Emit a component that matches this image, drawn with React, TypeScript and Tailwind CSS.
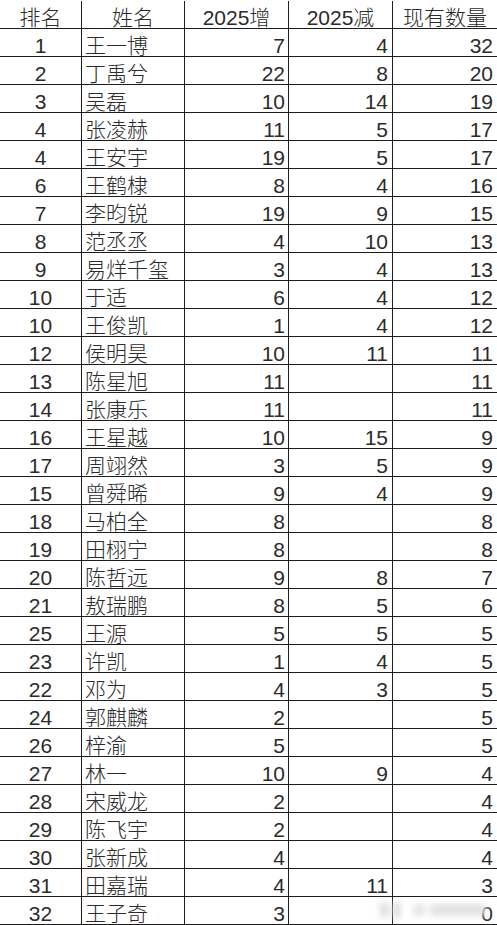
type Row = [string, string, string, string, string]

const rows: Row[] = [
  ['1', '王一博', '7', '4', '32'],
  ['2', '丁禹兮', '22', '8', '20'],
  ['3', '吴磊', '10', '14', '19'],
  ['4', '张凌赫', '11', '5', '17'],
  ['4', '王安宇', '19', '5', '17'],
  ['6', '王鹤棣', '8', '4', '16'],
  ['7', '李昀锐', '19', '9', '15'],
  ['8', '范丞丞', '4', '10', '13'],
  ['9', '易烊千玺', '3', '4', '13'],
  ['10', '于适', '6', '4', '12'],
  ['10', '王俊凯', '1', '4', '12'],
  ['12', '侯明昊', '10', '11', '11'],
  ['13', '陈星旭', '11', '', '11'],
  ['14', '张康乐', '11', '', '11'],
  ['16', '王星越', '10', '15', '9'],
  ['17', '周翊然', '3', '5', '9'],
  ['15', '曾舜晞', '9', '4', '9'],
  ['18', '马柏全', '8', '', '8'],
  ['19', '田栩宁', '8', '', '8'],
  ['20', '陈哲远', '9', '8', '7'],
  ['21', '敖瑞鹏', '8', '5', '6'],
  ['25', '王源', '5', '5', '5'],
  ['23', '许凯', '1', '4', '5'],
  ['22', '邓为', '4', '3', '5'],
  ['24', '郭麒麟', '2', '', '5'],
  ['26', '梓渝', '5', '', '5'],
  ['27', '林一', '10', '9', '4'],
  ['28', '宋威龙', '2', '', '4'],
  ['29', '陈飞宇', '2', '', '4'],
  ['30', '张新成', '4', '', '4'],
  ['31', '田嘉瑞', '4', '11', '3'],
  ['32', '王子奇', '3', '', '0'],
]

const header = ['排名', '姓名', '2025增', '2025减', '现有数量']

const cell = 'h-[28px] border-b border-[#1c1c1c] pt-[6px] leading-[21px] whitespace-nowrap overflow-visible'
const colCls = [
  'border-r text-center',
  'border-r pl-[3px] text-left',
  'border-r pr-[3px] text-right',
  'border-r pr-[4px] text-right',
  'pr-[4px] text-right',
]

export default function App() {
  return (
    <div
      className="relative min-h-[925px] w-[497px] bg-white pt-px text-[21px] font-light text-[#2b2b2b]"
      style={{ fontFamily: '"Liberation Sans", "Noto Sans CJK SC", sans-serif' }}
    >
      <div className="grid grid-cols-[82px_103px_104px_104px_104px]">
        {header.map((h, i) => (
          <div key={h} className={`${cell} border-[#1c1c1c] text-center ${i < 4 ? 'border-r' : ''}`}>
            {h}
          </div>
        ))}
        {rows.map((r, ri) =>
          r.map((v, ci) => (
            <div key={`${ri}-${ci}`} className={`${cell} border-[#1c1c1c] ${colCls[ci]}`}>
              {v}
            </div>
          )),
        )}
      </div>

      {/* blurred watermark over the last row */}
      <div className="pointer-events-none absolute left-[380px] top-[902px] flex items-center gap-[5px] blur-[3px]">
        <div className="h-[14px] w-[9px] bg-[#dedede]" />
        <div className="h-[16px] w-[6px] bg-[#d6d6d6]" />
        <div className="ml-[8px] h-[12px] w-[12px] bg-[#e6e6e6]" />
        <div className="h-[12px] w-[56px] bg-[#e2e2e2]" />
      </div>
    </div>
  )
}
